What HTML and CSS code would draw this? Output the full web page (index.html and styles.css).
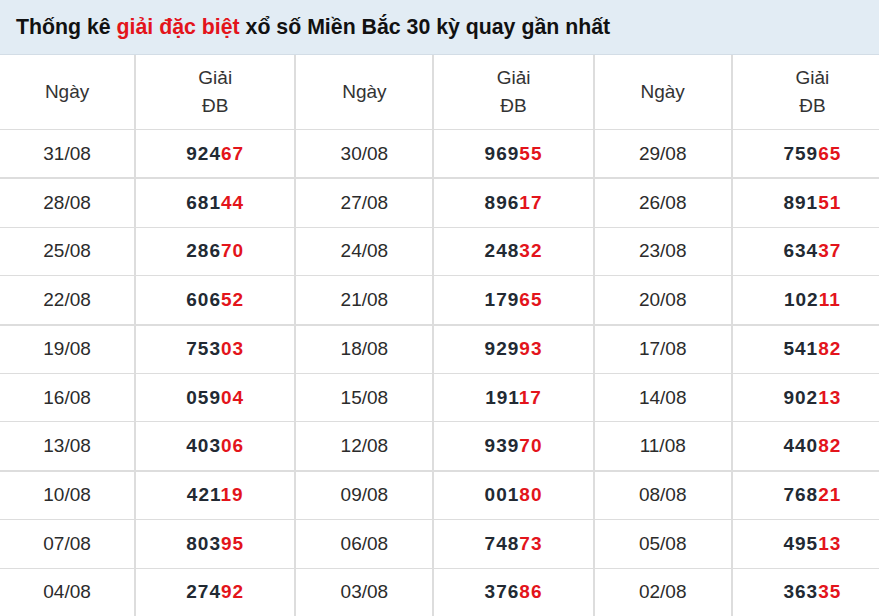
FILE: index.html
```html
<!DOCTYPE html>
<html lang="vi">
<head>
<meta charset="utf-8">
<title>Thống kê giải đặc biệt</title>
<link rel="stylesheet" href="styles.css">
</head>
<body>
<div class="page">
  <div class="box">
    <h2 class="title">Thống kê <span class="red">giải đặc biệt</span> xổ số Miền Bắc 30 kỳ quay gần nhất</h2>
    <table class="stats">
      <colgroup>
        <col class="c-date"><col class="c-prize"><col class="c-date2"><col class="c-prize"><col class="c-date2"><col class="c-prize">
      </colgroup>
      <thead>
        <tr>
          <th>Ngày</th><th>Giải<br>ĐB</th><th>Ngày</th><th>Giải<br>ĐB</th><th>Ngày</th><th>Giải<br>ĐB</th>
        </tr>
      </thead>
      <tbody>
        <tr><td>31/08</td><td class="num">924<span class="red">67</span></td><td>30/08</td><td class="num">969<span class="red">55</span></td><td>29/08</td><td class="num">759<span class="red">65</span></td></tr>
      </tbody>
      <tbody>
        <tr><td>28/08</td><td class="num">681<span class="red">44</span></td><td>27/08</td><td class="num">896<span class="red">17</span></td><td>26/08</td><td class="num">891<span class="red">51</span></td></tr>
        <tr><td>25/08</td><td class="num">286<span class="red">70</span></td><td>24/08</td><td class="num">248<span class="red">32</span></td><td>23/08</td><td class="num">634<span class="red">37</span></td></tr>
        <tr><td>22/08</td><td class="num">606<span class="red">52</span></td><td>21/08</td><td class="num">179<span class="red">65</span></td><td>20/08</td><td class="num">102<span class="red">11</span></td></tr>
      </tbody>
      <tbody>
        <tr><td>19/08</td><td class="num">753<span class="red">03</span></td><td>18/08</td><td class="num">929<span class="red">93</span></td><td>17/08</td><td class="num">541<span class="red">82</span></td></tr>
        <tr><td>16/08</td><td class="num">059<span class="red">04</span></td><td>15/08</td><td class="num">191<span class="red">17</span></td><td>14/08</td><td class="num">902<span class="red">13</span></td></tr>
        <tr><td>13/08</td><td class="num">403<span class="red">06</span></td><td>12/08</td><td class="num">939<span class="red">70</span></td><td>11/08</td><td class="num">440<span class="red">82</span></td></tr>
      </tbody>
      <tbody>
        <tr><td>10/08</td><td class="num">421<span class="red">19</span></td><td>09/08</td><td class="num">001<span class="red">80</span></td><td>08/08</td><td class="num">768<span class="red">21</span></td></tr>
        <tr><td>07/08</td><td class="num">803<span class="red">95</span></td><td>06/08</td><td class="num">748<span class="red">73</span></td><td>05/08</td><td class="num">495<span class="red">13</span></td></tr>
        <tr><td>04/08</td><td class="num">274<span class="red">92</span></td><td>03/08</td><td class="num">376<span class="red">86</span></td><td>02/08</td><td class="num">363<span class="red">35</span></td></tr>
      </tbody>
    </table>
  </div>
</div>
</body>
</html>
```

FILE: styles.css
```css
html, body {
  margin: 0;
  padding: 0;
  overflow: hidden;
  background: #fff;
}

.page {
  width: 100%;
  overflow: hidden;
}

.box {
  width: 892px;
  font-family: "Liberation Sans", Arial, sans-serif;
  color: #212529;
}

.title {
  margin: 0;
  height: 55px;
  box-sizing: border-box;
  padding: 0 16px;
  line-height: 54px;
  background: #e2ecf4;
  border-bottom: 1px solid #d3dde6;
  font-size: 21.3px;
  font-weight: bold;
  color: #111;
  white-space: nowrap;
}

.red {
  color: #e3141b;
}

.stats {
  width: 892px;
  border-collapse: collapse;
  table-layout: fixed;
  font-size: 19px;
}

.c-date { width: 135px; }
.c-date2 { width: 138px; }
.c-prize { width: 160px; }

.stats th {
  font-weight: normal;
  line-height: 28px;
  height: 74px;
  padding: 0;
  text-align: center;
  vertical-align: middle;
  color: #333;
  border-bottom: 1px solid #dddddd;
}

.stats td {
  height: 47.4px;
  padding: 0;
  text-align: center;
  vertical-align: middle;
  color: #2b2b2b;
  border-top: 1px solid #dddddd;
}

.stats th + th,
.stats td + td {
  border-left: 2px solid #dddddd;
}

.stats tbody + tbody tr:first-child td {
  border-top: 2px solid #dddddd;
}

.stats tbody:last-child tr:last-child td {
  border-bottom: 2px solid #dddddd;
}

.stats td.num {
  font-weight: bold;
  color: #222a33;
  letter-spacing: 1px;
}
```
